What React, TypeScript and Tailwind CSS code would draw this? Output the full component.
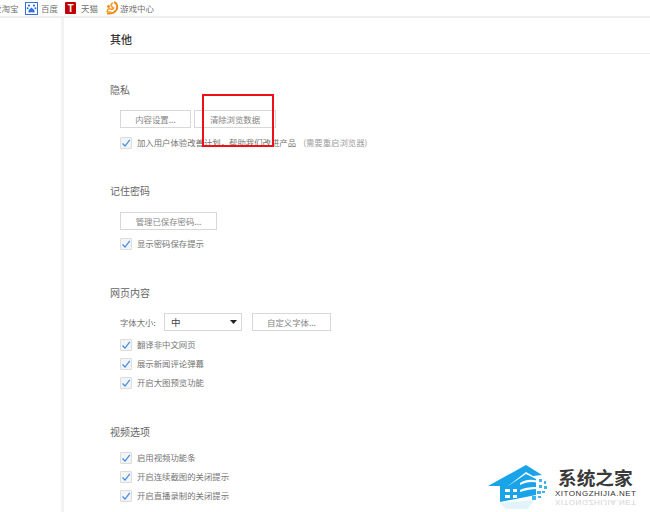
import React from 'react';

const font = { fontFamily: '"Noto Sans CJK SC", "Liberation Sans", sans-serif' };

const Checkbox = ({ label, hint }: { label: string; hint?: string }) => (
  <div className="flex items-center h-[19px]">
    <span className="flex items-center justify-center w-3 h-3 bg-[#f4f4f4] border border-[#dcdcdc] rounded-[1px] shrink-0">
      <svg width="10" height="10" viewBox="0 0 10 10" fill="none">
        <path d="M1.5 5.5 L4 8 L8.8 1.8" stroke="#3b8cec" strokeWidth="1.2" />
      </svg>
    </span>
    <span className="ml-[5px] text-[8.4px] text-[#757575] whitespace-nowrap">{label}</span>
    {hint && <span className="ml-[7px] text-[8.4px] text-[#a0a0a0] whitespace-nowrap">{hint}</span>}
  </div>
);

const Btn = ({ children, className }: { children: React.ReactNode; className: string }) => (
  <button
    type="button"
    className={`h-[18px] border border-[#d8d8d8] bg-white text-[8.4px] text-[#858585] flex items-center justify-center ${className}`}
  >
    {children}
  </button>
);

const Heading = ({ children }: { children: React.ReactNode }) => (
  <h3 className="text-[10px] leading-[14px] text-[#666]">{children}</h3>
);

const Toolbar = () => (
  <div className="flex items-center h-4 border-b-2 border-[#eeeeee] text-[8.5px] text-[#707070] shrink-0 box-content">
    <span className="w-[32px] -ml-[7px] whitespace-nowrap">爱淘宝</span>
    <svg width="13" height="13" viewBox="0 0 13 13" className="shrink-0">
      <rect x="0.5" y="0.5" width="12" height="12" fill="#fff" stroke="#3a6fd8" />
      <circle cx="4" cy="3.6" r="1.1" fill="#2f6ee0" />
      <circle cx="9" cy="3.6" r="1.1" fill="#2f6ee0" />
      <circle cx="2.6" cy="6.2" r="1" fill="#2f6ee0" />
      <circle cx="10.4" cy="6.2" r="1" fill="#2f6ee0" />
      <path d="M6.5 5.6 C4.6 7.6 3 8.4 3.4 10 C4 11 5.5 10.3 6.5 10.3 C7.5 10.3 9 11 9.6 10 C10 8.4 8.4 7.6 6.5 5.6Z" fill="#2f6ee0" />
    </svg>
    <span className="ml-[3px] w-[24px]">百度</span>
    <span className="w-[11px] h-[12px] bg-[#c00000] rounded-[1px] text-white text-[10px] font-bold leading-[12px] text-center shrink-0">
      T
    </span>
    <span className="ml-[5px] w-[24px]">天猫</span>
    <svg width="14" height="14" viewBox="0 0 14 14" fill="none" className="shrink-0">
      <path d="M9 1 C12.8 2.5 13 7 11 9.5 C9.5 11.5 7 12.5 4 12.5 L2 12.5" stroke="#ee8a1d" strokeWidth="2" />
      <path d="M8 2 C5 3 6 6 8.5 7 C7.5 9 5.5 8.5 4.5 7.5 C3 8 1.5 10 2.5 11 L6 11" stroke="#f5a033" strokeWidth="1.7" />
      <circle cx="3.5" cy="5.5" r="1.4" fill="#ee8a1d" />
    </svg>
    <span className="ml-[1px]">游戏中心</span>
  </div>
);

const Watermark = () => (
  <div className="absolute left-[478px] top-[456px] w-[172px] h-[56px] bg-white/80 flex items-start">
    <svg width="66" height="48" viewBox="0 0 66 48" className="ml-[8px] mt-[6px] shrink-0">
      {/* roof */}
      <path d="M2 24 L40 3 L56 13 L47 14 L40 10 L22 24 Z" fill="#19a3e8" />
      {/* house body */}
      <path d="M14 24 L22 24 L40 12 L50 17 L50 33 L14 40 Z" fill="#19a3e8" />
      {/* windows */}
      <path d="M19 27 h5 v3 h-5z M27 27 h4 v3 h-4z M19 33 h5 v3 h-5z M27 33 h4 v3 h-4z" fill="#fff" />
      {/* curved stripes */}
      <path d="M34 21 C40 17 46 17 52 19 L52 21 C46 19 40 20 34 23Z" fill="#fff" />
      <path d="M34 28 C40 25 46 25 51 25 L51 27 C46 27 40 28 34 30Z" fill="#fff" />
      <g fill="#3db5ec">
        <rect x="53" y="17" width="3" height="3" />
        <rect x="58" y="19" width="2" height="3" />
        <rect x="53" y="23" width="3" height="3" />
        <rect x="58" y="24" width="3" height="3" />
        <rect x="51" y="29" width="4" height="3" />
        <rect x="56" y="29" width="3" height="2" />
        <rect x="46" y="34" width="4" height="4" />
        <rect x="52" y="34" width="3" height="2" />
      </g>
      <path d="M14 41 L48 38 L42 47 L20 47Z" fill="#e3f3fc" />
    </svg>
    <div className="ml-[3px] mt-[10px] flex flex-col font-['Liberation_Sans']">
      <span className="ml-[3px] text-[18.7px] leading-[22px] font-bold text-[#3a3a3a] whitespace-nowrap font-['Noto_Sans_CJK_SC']">
        系统之家
      </span>
      <span className="mt-[2px] h-[8px] text-[8px] leading-[8px] text-[#333] tracking-[0.52px] whitespace-nowrap">
        XITONGZHIJIA.NET
      </span>
      <span className="mt-[1px] w-fit h-[7px] text-[8px] leading-[7px] text-[#d4d4d4] tracking-[0.52px] whitespace-nowrap -scale-y-100">
        XITONGZHIJIA.NET
      </span>
    </div>
  </div>
);

export default function App() {
  return (
    <div className="relative w-[650px] h-[512px] overflow-hidden bg-white flex flex-col" style={font}>
      <Toolbar />
      <div className="flex flex-1 min-h-0">
        <aside className="w-[61px] border-r-[3px] border-[#f3f3f3] shrink-0 box-content" />
        <main className="flex-1 pl-[46px] pt-[12px]">
          <h1 className="text-[11px] leading-[18px] font-medium text-[#333] pb-[5px] border-b border-[#ececec]">其他</h1>

          <section className="mt-[29px] h-[101px]">
            <Heading>隐私</Heading>
            <div className="pl-[10px] mt-[13px]">
              <div className="flex gap-[3px]">
                <Btn className="w-[71px]">内容设置...</Btn>
                <Btn className="w-[82px]">清除浏览数据</Btn>
              </div>
              <div className="mt-[5px]">
                <Checkbox label="加入用户体验改善计划，帮助我们改进产品" hint="(需要重启浏览器)" />
              </div>
            </div>
          </section>

          <section className="h-[102px]">
            <Heading>记住密码</Heading>
            <div className="pl-[10px] mt-[14px]">
              <Btn className="w-[97px]">管理已保存密码...</Btn>
              <div className="mt-[4px]">
                <Checkbox label="显示密码保存提示" />
              </div>
            </div>
          </section>

          <section className="h-[139px]">
            <Heading>网页内容</Heading>
            <div className="pl-[10px] mt-[13px]">
              <div className="flex items-center">
                <span className="w-[44px] text-[8.4px] text-[#757575]">字体大小:</span>
                <div className="w-[78px] h-[18px] border border-[#d8d8d8] flex items-center justify-between pl-[6px] pr-[4px]">
                  <span className="text-[9.5px] text-[#444]">中</span>
                  <svg width="7" height="4" viewBox="0 0 7 4">
                    <path d="M0 0 H7 L3.5 4Z" fill="#222" />
                  </svg>
                </div>
                <Btn className="w-[79px] ml-[10px]">自定义字体...</Btn>
              </div>
              <div className="mt-[4px]">
                <Checkbox label="翻译非中文网页" />
                <Checkbox label="展示新闻评论弹幕" />
                <Checkbox label="开启大图预览功能" />
              </div>
            </div>
          </section>

          <section>
            <Heading>视频选项</Heading>
            <div className="pl-[10px] mt-[9px]">
              <Checkbox label="启用视频功能条" />
              <Checkbox label="开启连续截图的关闭提示" />
              <Checkbox label="开启直播录制的关闭提示" />
            </div>
          </section>
        </main>
      </div>

      <div className="absolute left-[202px] top-[94px] w-[72px] h-[53px] border-2 border-[#f00f14]" />
      <Watermark />
    </div>
  );
}
